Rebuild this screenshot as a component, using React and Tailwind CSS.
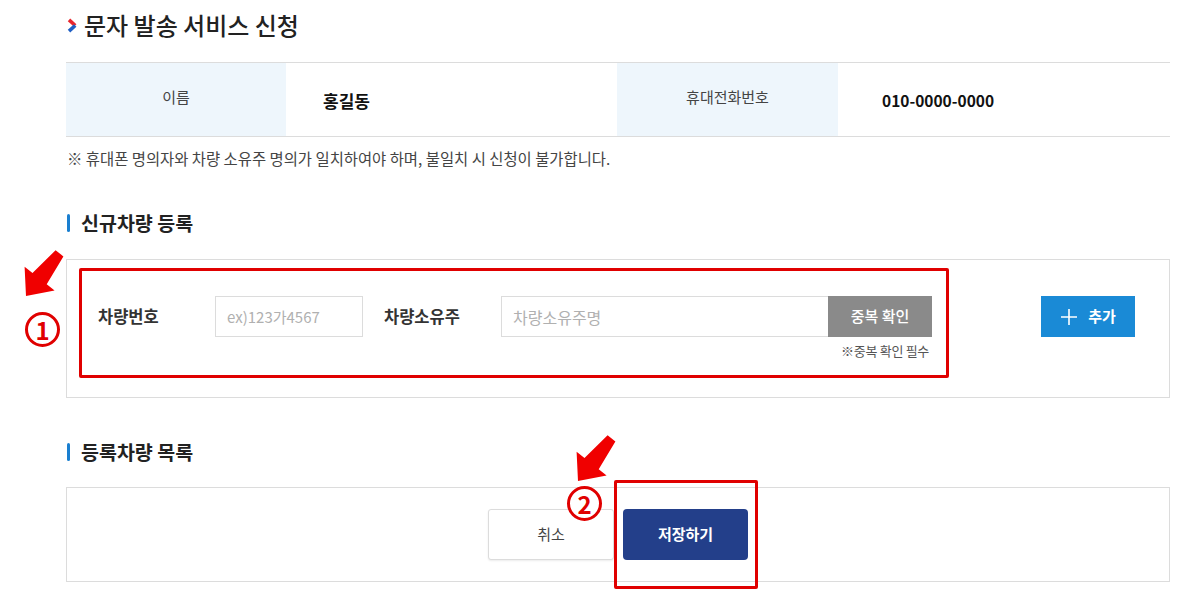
import React from "react";

const font = { fontFamily: '"Noto Sans CJK KR", "Noto Sans", sans-serif' };

// red annotation arrow (points down-left)
const RedArrow = ({ className }) => (
  <svg className={className} width="50" height="60" viewBox="0 0 50 60">
    <polygon
      points="10,53 38.6,47.4 30.7,41.2 47.4,13.4 39.6,7.2 16.5,30 8.6,23.8"
      fill="#f00000"
    />
  </svg>
);

const Step = ({ n, className }) => (
  <div
    className={`absolute w-[35px] h-[35px] rounded-full border-[3px] border-[#e00000] bg-white flex items-center justify-center text-[24px] font-bold leading-none text-[#e00000] ${className}`}
  >
    {n}
  </div>
);

const SectionTitle = ({ children, className }) => (
  <div className={`flex items-center h-[24px] pl-[1px] ${className}`}>
    <span className="w-[3px] h-[18px] rounded-full bg-[#1a7fd0]" />
    <h3 className="ml-[11px] text-[19.5px] font-bold text-[#222]">{children}</h3>
  </div>
);

export default function App() {
  return (
    <div style={font} className="relative w-[1183px] h-[605px] bg-white overflow-hidden">
      <div className="ml-[66px] w-[1104px]">
        {/* Title */}
        <div className="flex items-center h-[50px]">
          <svg width="11" height="15" viewBox="0 0 11 15" className="ml-[1px]">
            <path d="M2 1.8 L8.2 7.5" stroke="#e8262d" strokeWidth="3.6" />
            <path d="M8.2 7.5 L2 13.2" stroke="#1f5fc4" strokeWidth="3.6" />
          </svg>
          <h2 className="ml-[6px] text-[24px] font-medium text-[#222]">문자 발송 서비스 신청</h2>
        </div>

        {/* Info table */}
        <div className="mt-[12px] border-y border-[#dcdcdc] flex h-[75px]">
          <div className="w-[220px] bg-[#eef6fc] flex items-center justify-center pb-[4px] text-[15px] text-[#444]">이름</div>
          <div className="w-[331px] flex items-center pl-[37px] pt-[2px] text-[17px] font-bold text-[#111]">홍길동</div>
          <div className="w-[221px] bg-[#eef6fc] flex items-center justify-center pb-[4px] text-[15px] text-[#444]">휴대전화번호</div>
          <div className="flex-1 flex items-center pl-[44px] pt-[2px] text-[15.5px] font-bold text-[#111]">010-0000-0000</div>
        </div>

        <p className="mt-[11px] leading-[20px] text-[15.4px] text-[#444] pl-[1px]">
          ※ 휴대폰 명의자와 차량 소유주 명의가 일치하여야 하며, 불일치 시 신청이 불가합니다.
        </p>

        <SectionTitle className="mt-[43px]">신규차량 등록</SectionTitle>

        {/* New vehicle box */}
        <div className="mt-[24px] h-[139px] border border-[#dcdcdc] flex items-start pt-[36px] pl-[31px]">
          <label className="w-[117px] h-[41px] flex items-center text-[16.5px] font-bold text-[#333]">차량번호</label>
          <input
            placeholder="ex)123가4567"
            className="w-[148px] h-[41px] border border-[#dcdcdc] px-[11px] text-[15px] placeholder:text-[#b0b0b0] outline-none"
          />
          <label className="ml-[21px] w-[117px] h-[41px] flex items-center text-[16.5px] font-bold text-[#333]">차량소유주</label>
          <div className="flex flex-col">
            <div className="flex">
              <input
                placeholder="차량소유주명"
                className="w-[327px] h-[41px] border border-[#dcdcdc] border-r-0 px-[11px] text-[16px] placeholder:text-[#b0b0b0] outline-none"
              />
              <button className="w-[104px] h-[41px] bg-[#8a8a8a] text-white text-[15px] font-medium">중복 확인</button>
            </div>
            <span className="self-end mt-[6px] pr-[3px] text-[13px] leading-[16px] text-[#555] tracking-[-0.3px]">※중복 확인 필수</span>
          </div>
          <button className="ml-[109px] w-[94px] h-[41px] bg-[#1a8ad6] text-white flex items-center justify-center gap-[10px]">
            <svg width="18" height="18" viewBox="0 0 18 18">
              <path d="M9 1v16M1 9h16" stroke="white" strokeWidth="1.6" />
            </svg>
            <span className="text-[15px] font-bold">추가</span>
          </button>
        </div>

        <SectionTitle className="mt-[42px]">등록차량 목록</SectionTitle>

        {/* Registered list */}
        <div className="mt-[23px] h-[95px] border border-[#dcdcdc] flex items-center justify-center gap-[9px]">
          <button className="w-[126px] h-[51px] bg-white border border-[#dcdcdc] rounded-[3px] shadow-[0_1px_2px_rgba(0,0,0,0.08)] text-[15px] text-[#444]">취소</button>
          <button className="w-[125px] h-[51px] bg-[#233f8a] rounded-[4px] text-[15px] font-bold text-white">저장하기</button>
        </div>
      </div>

      {/* Annotations */}
      <div className="absolute left-[79px] top-[268px] w-[870px] h-[110px] border-[3px] border-[#e00000] rounded-[2px]" />
      <RedArrow className="absolute left-[16px] top-[243px]" />
      <Step n="1" className="left-[25px] top-[312px]" />

      <div className="absolute left-[614px] top-[480px] w-[144px] h-[109px] border-[3px] border-[#e00000] rounded-[2px]" />
      <RedArrow className="absolute left-[568px] top-[428px]" />
      <Step n="2" className="left-[567px] top-[486px]" />
    </div>
  );
}
